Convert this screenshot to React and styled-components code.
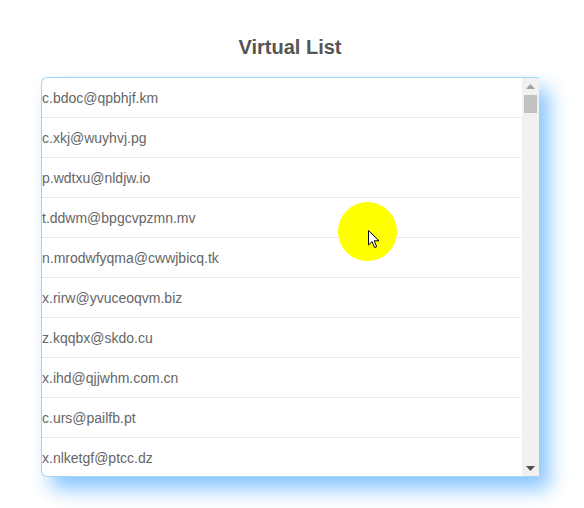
import React from 'react';
import styled, { createGlobalStyle } from 'styled-components';

/* ---------- GLOBAL ---------- */
const Global = createGlobalStyle`
    html, body {
        margin: 0;
        padding: 0;
        background: #fff;
        font-family: "Liberation Sans", Arial, sans-serif;
    }
`

/* ---------- DATA ---------- */
const emails = [
    'c.bdoc@qpbhjf.km',
    'c.xkj@wuyhvj.pg',
    'p.wdtxu@nldjw.io',
    't.ddwm@bpgcvpzmn.mv',
    'n.mrodwfyqma@cwwjbicq.tk',
    'x.rirw@yvuceoqvm.biz',
    'z.kqqbx@skdo.cu',
    'x.ihd@qjjwhm.com.cn',
    'c.urs@pailfb.pt',
    'x.nlketgf@ptcc.dz',
]
const TOTAL = 200
const ROW_H = 40
const VIEW_H = 398

/* ---------- STYLES ---------- */
const Page = styled.div`
    position: relative;
    width: 584px;
    height: 508px;
    padding-top: 35px;
    box-sizing: border-box;
`
const Title = styled.h2`
    margin: 0 0 18px 41px;
    width: 498px;
    text-align: center;
    font-size: 20px;
    line-height: 24px;
    font-weight: bold;
    color: #555;
`
const ListBox = styled.div`
    display: flex;
    margin-left: 41px;
    width: 498px;
    height: 400px;
    box-sizing: border-box;
    border: 1px solid #a6d5f0;
    border-right: none;
    border-radius: 6px 0 0 6px;
    background: #fff;
    box-shadow: 10px 12px 20px #86c4ff;
`
const Rows = styled.div`
    flex: 1;
    overflow: hidden;
    border-radius: 6px 0 0 6px;
`
const Row = styled.div`
    height: ${ROW_H}px;
    box-sizing: border-box;
    border-bottom: 1px dotted #d6d6d6;
    display: flex;
    align-items: center;
    font-size: 14px;
    color: #666;
`
const ScrollBar = styled.div`
    width: 17px;
    display: flex;
    flex-direction: column;
    background: #f1f1f1;
`
const ArrowBtn = styled.div`
    height: 16px;
    display: flex;
    align-items: center;
    justify-content: center;
    svg { display: block; }
`
const Track = styled.div`
    flex: 1;
    padding: 1px 2px;
`
const Thumb = styled.div`
    background: #c1c1c1;
`
const Pointer = styled.div`
    position: absolute;
    left: 338px;
    top: 202px;
    width: 59px;
    height: 59px;
    border-radius: 50%;
    background: #ffff00;
    pointer-events: none;
`
const Cursor = styled.svg`
    position: absolute;
    left: 30px;
    top: 28px;
`

export default function App() {
    const trackH = VIEW_H - 32 - 2
    const thumbH = Math.max(18, Math.round(trackH * VIEW_H / (TOTAL * ROW_H)))
    return (
        <Page>
            <Global/>
            <Title>Virtual List</Title>
            <ListBox>
                <Rows>
                    {emails.map((e, i) => <Row key={i}>{e}</Row>)}
                </Rows>
                <ScrollBar>
                    <ArrowBtn>
                        <svg width="9" height="5" viewBox="0 0 9 5"><path d="M0 5h9L4.5 0z" fill="#a3a3a3"/></svg>
                    </ArrowBtn>
                    <Track>
                        <Thumb style={{ height: thumbH }}/>
                    </Track>
                    <ArrowBtn>
                        <svg width="9" height="5" viewBox="0 0 9 5"><path d="M0 0h9L4.5 5z" fill="#505050"/></svg>
                    </ArrowBtn>
                </ScrollBar>
            </ListBox>
            <Pointer>
                <Cursor width="12" height="19" viewBox="0 0 12 19">
                    <path d="M0.5 0.5 L0.5 15 L4 11.6 L6.6 17.6 L8.7 16.7 L6.2 10.8 L11 10.8 Z" fill="#fff" stroke="#000" strokeWidth="1"/>
                </Cursor>
            </Pointer>
        </Page>
    )
}
